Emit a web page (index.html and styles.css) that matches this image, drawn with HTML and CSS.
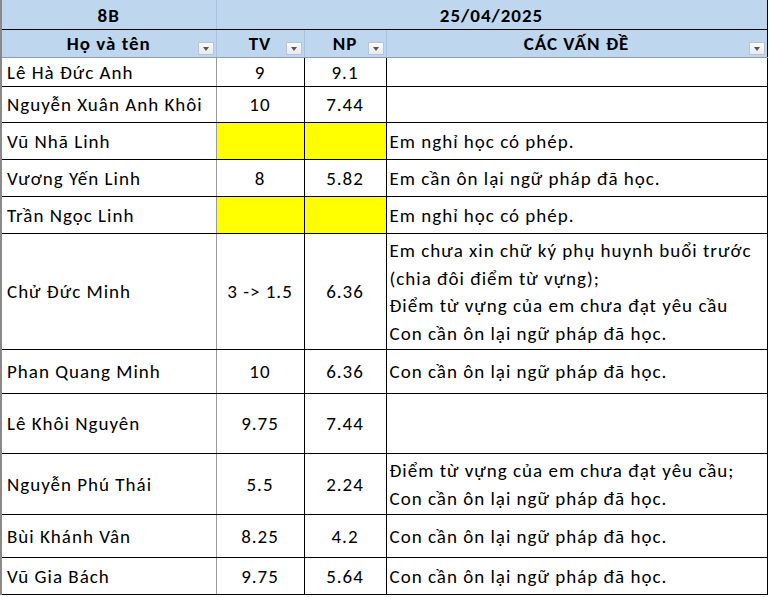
FILE: index.html
```html
<!DOCTYPE html>
<html lang="vi">
<head>
<meta charset="utf-8">
<title>8B - 25/04/2025</title>
<link rel="stylesheet" href="styles.css">
</head>
<body>
<table class="sheet">
  <colgroup>
    <col class="c-name">
    <col class="c-tv">
    <col class="c-np">
    <col class="c-issue">
  </colgroup>
  <thead>
    <tr class="h1">
      <th class="hd">8B</th>
      <th class="hd" colspan="3">25/04/2025</th>
    </tr>
    <tr class="h2">
      <th class="hd">Họ và tên<span class="flt"></span></th>
      <th class="hd">TV<span class="flt"></span></th>
      <th class="hd">NP<span class="flt"></span></th>
      <th class="hd">CÁC VẤN ĐỀ<span class="flt"></span></th>
    </tr>
  </thead>
  <tbody>
    <tr class="r29"><td class="nm">Lê Hà Đức Anh</td><td class="num">9</td><td class="num">9.1</td><td class="iss"></td></tr>
    <tr class="r36"><td class="nm">Nguyễn Xuân Anh Khôi</td><td class="num">10</td><td class="num">7.44</td><td class="iss"></td></tr>
    <tr class="r37"><td class="nm">Vũ Nhã Linh</td><td class="num yel"></td><td class="num yel"></td><td class="iss">Em nghỉ học có phép.</td></tr>
    <tr class="r37"><td class="nm">Vương Yến Linh</td><td class="num">8</td><td class="num">5.82</td><td class="iss">Em cần ôn lại ngữ pháp đã học.</td></tr>
    <tr class="r37"><td class="nm">Trần Ngọc Linh</td><td class="num yel"></td><td class="num yel"></td><td class="iss">Em nghỉ học có phép.</td></tr>
    <tr class="r116"><td class="nm">Chử Đức Minh</td><td class="num">3 -&gt; 1.5</td><td class="num">6.36</td><td class="iss">Em chưa xin chữ ký phụ huynh buổi trước<br>(chia đôi điểm từ vựng);<br>Điểm từ vựng của em chưa đạt yêu cầu<br>Con cần ôn lại ngữ pháp đã học.</td></tr>
    <tr class="r44"><td class="nm">Phan Quang Minh</td><td class="num">10</td><td class="num">6.36</td><td class="iss">Con cần ôn lại ngữ pháp đã học.</td></tr>
    <tr class="r60"><td class="nm">Lê Khôi Nguyên</td><td class="num">9.75</td><td class="num">7.44</td><td class="iss"></td></tr>
    <tr class="r61"><td class="nm">Nguyễn Phú Thái</td><td class="num">5.5</td><td class="num">2.24</td><td class="iss">Điểm từ vựng của em chưa đạt yêu cầu;<br>Con cần ôn lại ngữ pháp đã học.</td></tr>
    <tr class="r43"><td class="nm">Bùi Khánh Vân</td><td class="num">8.25</td><td class="num">4.2</td><td class="iss">Con cần ôn lại ngữ pháp đã học.</td></tr>
    <tr class="r37"><td class="nm">Vũ Gia Bách</td><td class="num">9.75</td><td class="num">5.64</td><td class="iss">Con cần ôn lại ngữ pháp đã học.</td></tr>
  </tbody>
</table>
</body>
</html>
```
FILE: styles.css
```css
html, body {
  margin: 0;
  padding: 0;
  background: #fff;
}

.sheet {
  border-collapse: collapse;
  table-layout: fixed;
  width: 766px;
  font-family: Calibri, Carlito, Lato, "Open Sans", sans-serif;
  font-size: 19px;
  letter-spacing: 1px;
  color: #000;
}

.c-name { width: 215px; }
.c-tv { width: 88px; }
.c-np { width: 82px; }
.c-issue { width: 381px; }

.sheet th,
.sheet td {
  padding: 0;
  overflow: hidden;
  white-space: nowrap;
}

.sheet .hd {
  background: #bed7ee;
  font-weight: bold;
  text-align: center;
  vertical-align: bottom;
  position: relative;
  line-height: 22px;
  padding-bottom: 2px;
  border-left: 1px solid #a9c1dc;
  border-right: 1px solid #a9c1dc;
}

.h1 { height: 29px; }
.h1 .hd { border-bottom: 1px solid #000; }
.h2 { height: 28px; }
.h2 .hd { border-bottom: 1px solid #8e9fb3; }

.sheet tr > :first-child { border-left: 2px solid #8a8a8a; }
.sheet tr > :last-child { border-right: 1px solid #000; }

.flt {
  position: absolute;
  right: 2px;
  bottom: 2px;
  width: 14px;
  height: 11px;
  border: 1px solid #b8c4d2;
  background: linear-gradient(#fbfcfd, #e6eaef);
}

.flt::after {
  content: "";
  position: absolute;
  left: 4px;
  top: 4px;
  border-left: 3px solid transparent;
  border-right: 3px solid transparent;
  border-top: 4px solid #555;
}

.r29 { height: 29px; }
.r36 { height: 36px; }
.r37 { height: 37px; }
.r43 { height: 43px; }
.r44 { height: 44px; }
.r60 { height: 60px; }
.r61 { height: 61px; }
.r116 { height: 116px; }

.sheet tbody td {
  border-bottom: 1px solid #000;
  vertical-align: middle;
  line-height: 27.7px;
  padding-top: 1px;
}

.sheet .nm {
  padding-left: 5px;
  border-right: 1px solid #9a9a9a;
}

.sheet .num {
  text-align: center;
  border-right: 1px solid #000;
}

.sheet .iss {
  padding-left: 3px;
}

.yel { background: #ffff00; }
```
